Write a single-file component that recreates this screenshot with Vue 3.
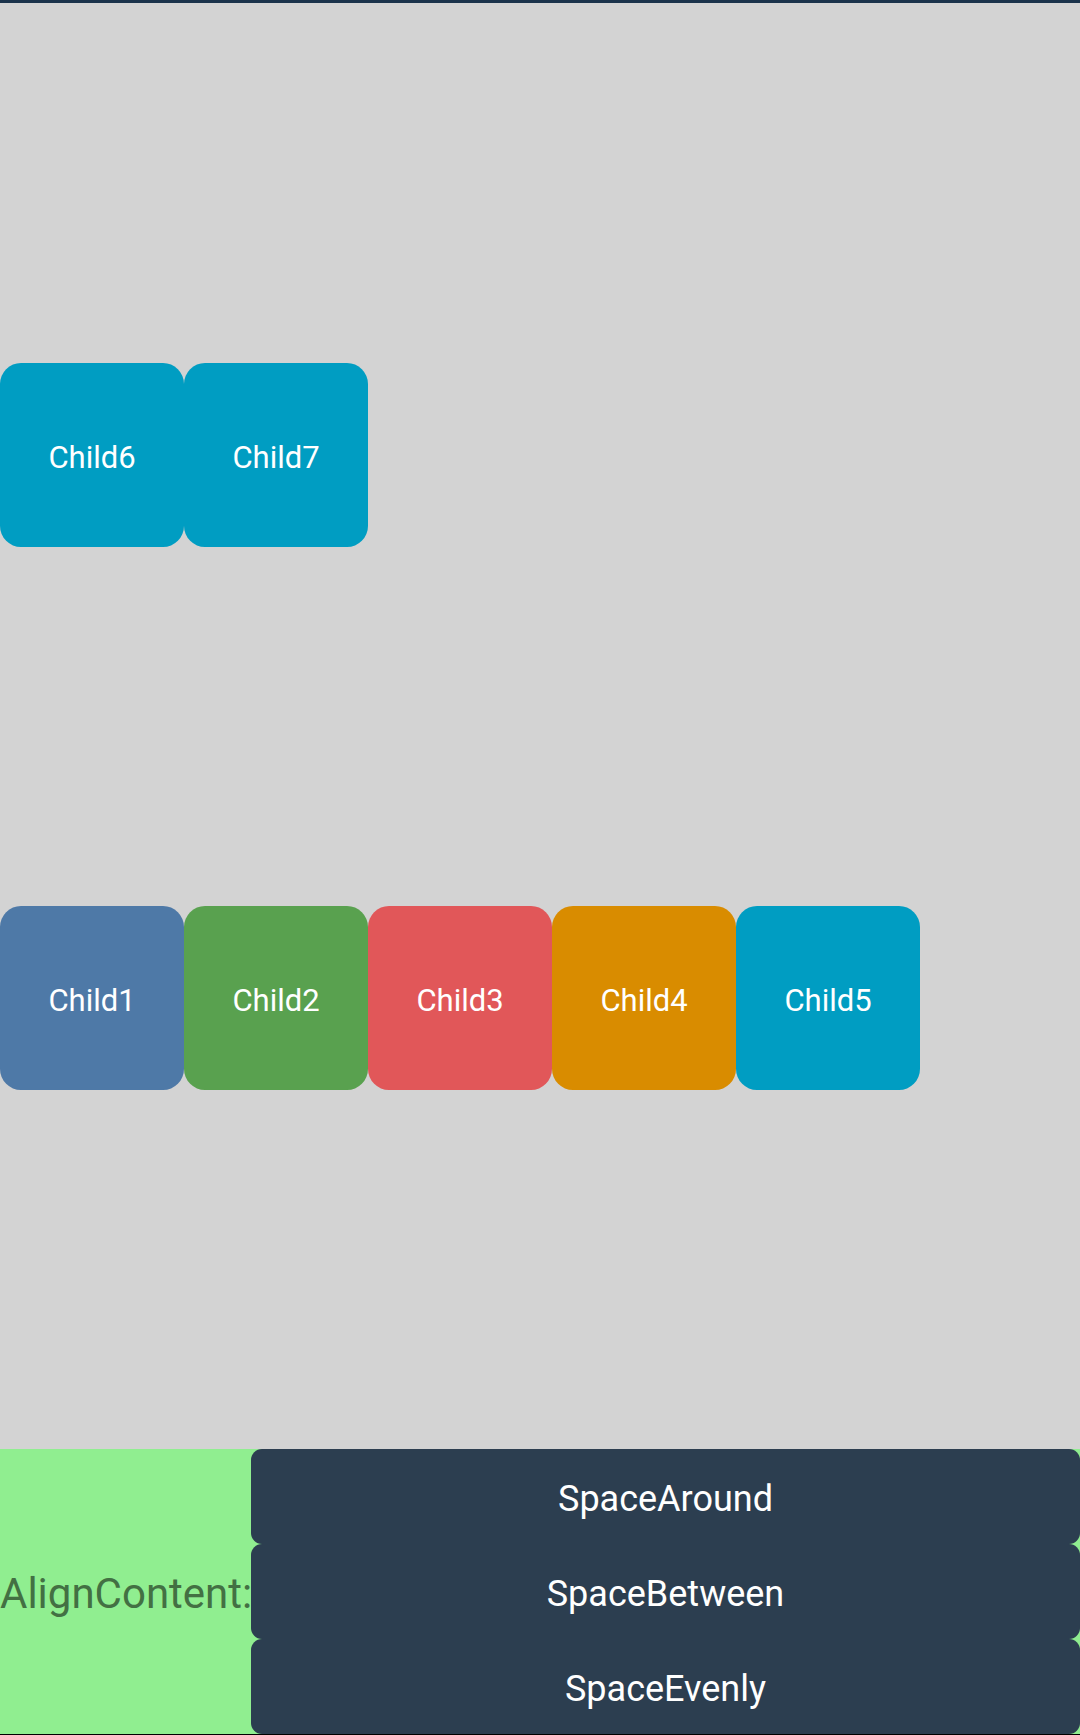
<script setup>
import { ref } from 'vue'

const children = [
  { name: 'Child1', tone: 'blue' },
  { name: 'Child2', tone: 'green' },
  { name: 'Child3', tone: 'red' },
  { name: 'Child4', tone: 'orange' },
  { name: 'Child5', tone: 'cyan' },
  { name: 'Child6', tone: 'cyan' },
  { name: 'Child7', tone: 'cyan' }
]
const options = ['SpaceAround', 'SpaceBetween', 'SpaceEvenly']
const alignContent = ref('SpaceEvenly')
const cssValues = {
  SpaceAround: 'space-around',
  SpaceBetween: 'space-between',
  SpaceEvenly: 'space-evenly'
}
</script>

<template>
  <main class="page">
    <section class="stage" :class="cssValues[alignContent]">
      <div v-for="child in children" :key="child.name" class="child" :class="child.tone">
        {{ child.name }}
      </div>
    </section>
    <section class="controls">
      <span id="align-label" class="label">AlignContent:</span>
      <div class="options" role="group" aria-labelledby="align-label">
        <button v-for="option in options" :key="option" type="button" @click="alignContent = option">
          {{ option }}
        </button>
      </div>
    </section>
  </main>
</template>

<style>
body {
  margin: 0;
}
</style>

<style scoped>
.page {
  box-sizing: border-box;
  min-height: 100vh;
  display: flex;
  flex-direction: column;
  border-top: 3px solid #1b334b;
  border-bottom: 1px solid #000;
  background: #d3d3d3;
  font-family: Roboto, sans-serif;
}
.stage {
  flex: 1;
  display: flex;
  flex-wrap: wrap-reverse;
  padding-top: 1px;
}
.space-around {
  align-content: space-around;
}
.space-between {
  align-content: space-between;
}
.space-evenly {
  align-content: space-evenly;
}
.child {
  box-sizing: border-box;
  width: 184px;
  height: 184px;
  padding-top: 4px;
  border-radius: 21px;
  display: flex;
  align-items: center;
  justify-content: center;
  color: #fff;
  font-size: 31px;
}
.blue { background: #4e79a7; }
.green { background: #59a14f; }
.red { background: #e15759; }
.orange { background: #d98c00; }
.cyan { background: #009dc2; }
.controls {
  display: flex;
  align-items: center;
  background: #90ee90;
}
.label {
  width: 251px;
  padding-top: 4px;
  color: #437043;
  font-size: 42px;
  white-space: nowrap;
}
.options {
  flex: 1;
  display: flex;
  flex-direction: column;
}
button {
  height: 95px;
  padding: 4px 0 0;
  border: 0;
  border-radius: 11px;
  background: #2c3e50;
  color: #fff;
  font-family: inherit;
  font-size: 36px;
}
</style>
